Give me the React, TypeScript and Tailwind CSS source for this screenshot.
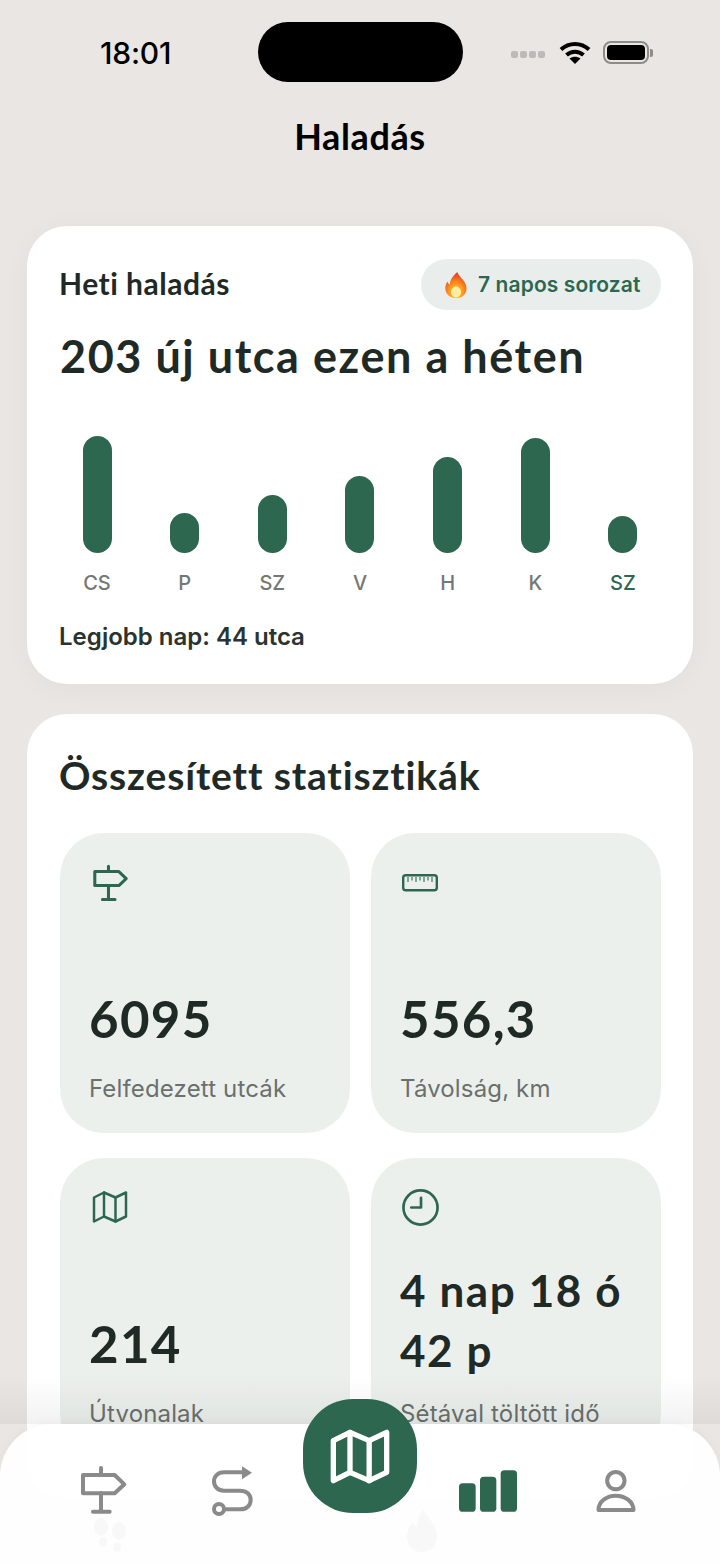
const GREEN = "#2E674F";

function Signpost({ color, className }: { color: string; className: string }) {
  return (
    <svg viewBox="235 255 150 150" fill="none" stroke={color} strokeWidth="12" strokeLinecap="round" strokeLinejoin="round" className={className}>
      <path d="M250 285H345L374 313L345 340H250Z" />
      <path d="M304 264V285M304 340V395M280 395H330" />
    </svg>
  );
}

function Ruler({ className }: { className: string }) {
  return (
    <svg viewBox="0 0 36 18" fill="none" stroke={GREEN} strokeLinejoin="round" className={className}>
      <rect x="1.2" y="1.2" width="33.6" height="15" rx="2.5" strokeWidth="2.4" />
      <path d="M6 3V8M10 3V6.5M14 3V8M18 3V6.5M22 3V8M26 3V6.5M30 3V8" strokeWidth="1.1" />
    </svg>
  );
}

function MapIcon({ color, strokeWidth, className }: { color: string; strokeWidth: number; className: string }) {
  return (
    <svg viewBox="0 0 36 34" fill="none" stroke={color} strokeWidth={strokeWidth} strokeLinecap="round" strokeLinejoin="round" className={className}>
      <path d="M2 7.5L12 2.5L23.5 7.5L34 2.5V26.5L23.5 31.5L12 26.5L2 31.5Z" />
      <path d="M12 2.5V26.5M23.5 7.5V31.5" />
    </svg>
  );
}

function Clock({ className }: { className: string }) {
  return (
    <svg viewBox="0 0 36 36" fill="none" stroke={GREEN} strokeWidth="2.6" strokeLinecap="round" strokeLinejoin="round" className={className}>
      <circle cx="18" cy="18" r="16.6" />
      <path d="M18.5 8.5V18H9" />
    </svg>
  );
}

function RouteIcon({ className }: { className: string }) {
  return (
    <svg viewBox="625 250 135 162" fill="none" stroke="#8A8A8A" strokeWidth="12" strokeLinecap="round" className={className}>
      <path d="M730 275H670C650 275 640 288 640 302C640 318 652 330 670 330H718C738 330 750 342 750 358C750 374 738 386 718 386H674" />
      <circle cx="655" cy="385" r="15" />
      <path d="M724 257L754 276L724 296Z" fill="#8A8A8A" stroke="none" />
    </svg>
  );
}

function BarsIcon({ className }: { className: string }) {
  return (
    <svg viewBox="296 269 174 125" fill={GREEN} className={className}>
      <rect x="296" y="308" width="50" height="86" rx="11" />
      <rect x="359" y="289" width="49" height="105" rx="11" />
      <rect x="421" y="269" width="49" height="125" rx="11" />
    </svg>
  );
}

function Person({ className }: { className: string }) {
  return (
    <svg viewBox="705 265 125 132" fill="none" stroke="#8A8A8A" strokeWidth="12" strokeLinejoin="round" className={className}>
      <circle cx="767" cy="300" r="26" />
      <path d="M715 388C715 362 740 345 767 345C794 345 820 362 820 388Z" />
    </svg>
  );
}

function Flame({ className }: { className: string }) {
  return (
    <svg viewBox="0 0 22 26" className={className}>
      <defs>
        <radialGradient id="flameFill" cx="0.5" cy="0.78" r="0.7">
          <stop offset="0" stopColor="#FFE45C" />
          <stop offset="0.45" stopColor="#FF9A1F" />
          <stop offset="1" stopColor="#E8431F" />
        </radialGradient>
      </defs>
      <path d="M12.5 0C13.5 4 17 6 19.5 10C22.5 15 22 20 18.5 23.5C16.5 25.3 14 26 11 26C7 26 3.5 24.5 1.5 21C-0.5 17 0.3 12.5 2.5 9.5C3 11 3.6 12 5 12.5C4.8 8 8 3.5 12.5 0Z" fill="url(#flameFill)" />
      <ellipse cx="11" cy="20" rx="5" ry="5.4" fill="#FFF0A0" />
    </svg>
  );
}

const bars = [
  { label: "CS", height: 117 },
  { label: "P", height: 40 },
  { label: "SZ", height: 58 },
  { label: "V", height: 77 },
  { label: "H", height: 96 },
  { label: "K", height: 115 },
  { label: "SZ", height: 37, active: true },
];

function Tile({ icon, value, label, small }: { icon: React.ReactNode; value: React.ReactNode; label: string; small?: boolean }) {
  return (
    <div className="h-[300px] rounded-[44px] bg-[#ECF0ED] pl-[29px] pr-[20px] pt-[31px] pb-[29px] flex flex-col justify-between">
      <div className="h-[38px]">{icon}</div>
      <div>
        <div className={`font-['Lato',sans-serif] font-bold leading-[60px] text-[#1F2A27] ${small ? "text-[44px] tracking-[1.6px]" : "text-[51px] tracking-[1.3px]"}`}>{value}</div>
        <div className={`text-[24px] leading-[30px] tracking-[0.15px] text-[#6B706D] ${small ? "mt-[19px]" : "mt-[25px]"}`}>{label}</div>
      </div>
    </div>
  );
}

export default function App() {
  return (
    <div className="relative w-[720px] h-[1564px] overflow-hidden bg-[#E9E6E3] font-['Inter',sans-serif]">
      {/* Status bar */}
      <div className="relative h-[106px] pt-[35px] px-[100px] flex justify-between">
        <span className="text-[30px] leading-[36px] font-medium text-black tracking-[-0.2px]">18:01</span>
        <div className="absolute left-[258px] top-[22px] w-[205px] h-[60px] rounded-[30px] bg-black" />
        <div className="absolute left-[511px] top-[41px] flex items-center">
          <div className="flex gap-[2px] mt-[4px]">
            <span className="w-[7px] h-[7px] rounded-[2px] bg-[#BDBBB9]" />
            <span className="w-[7px] h-[7px] rounded-[2px] bg-[#BDBBB9]" />
            <span className="w-[7px] h-[7px] rounded-[2px] bg-[#BDBBB9]" />
            <span className="w-[7px] h-[7px] rounded-[2px] bg-[#BDBBB9]" />
          </div>
          <svg viewBox="0 0 32 23" fill="none" stroke="#000" strokeWidth="4" className="ml-[14px] w-[32px] h-[23px]">
            <path d="M2 8.5C10 1 22 1 30 8.5" />
            <path d="M7.5 14C12.5 9.5 19.5 9.5 24.5 14" />
            <path d="M16 23L10.5 17.5C14 15 18 15 21.5 17.5Z" fill="#000" stroke="none" />
          </svg>
          <div className="ml-[12px] flex items-center">
            <div className="w-[46px] h-[23px] rounded-[8px] border-[2px] border-[#8E8C8A] p-[2px]">
              <div className="w-full h-full rounded-[4px] bg-black" />
            </div>
            <div className="ml-[1px] w-[3px] h-[8px] rounded-r-[2px] bg-[#8E8C8A]" />
          </div>
        </div>
      </div>

      {/* Title */}
      <h1 className="text-center text-[36px] leading-[60px] font-bold text-black font-['Lato',sans-serif] tracking-[0.6px]">Haladás</h1>

      <div className="mt-[60px] px-[27px] flex flex-col gap-[30px]">
        {/* Weekly card */}
        <section className="h-[458px] rounded-[40px] bg-white shadow-[0_4px_28px_rgba(0,0,0,0.04)] pl-[33px] pr-[32px] pt-[33px]">
          <div className="flex items-center justify-between">
            <h2 className="-mt-[4px] -ml-[1px] font-['Lato',sans-serif] font-bold text-[30px] leading-[50px] tracking-[0.5px] text-[#1F2A27]">Heti haladás</h2>
            <div className="h-[51px] w-[240px] rounded-full bg-[#E9EEEC] flex items-center pl-[24px] gap-[11px]">
              <Flame className="w-[22px] h-[26px]" />
              <span className="text-[21px] font-semibold tracking-[0.1px] text-[#2E674F]">7 napos sorozat</span>
            </div>
          </div>
          <p className="mt-[18px] font-['Lato',sans-serif] font-bold text-[45px] leading-[56px] tracking-[1.55px] text-[#1F2A27]">203 új utca ezen a héten</p>
          <div className="mt-[51px] ml-[1px] mr-[2px] h-[118px] flex justify-between items-end">
            {bars.map((b, i) => (
              <div key={i} className="w-[72px] flex justify-center">
                <div className="w-[29px] rounded-full bg-[#2E674F]" style={{ height: b.height }} />
              </div>
            ))}
          </div>
          <div className="mt-[17px] ml-[1px] mr-[2px] flex justify-between">
            {bars.map((b, i) => (
              <span key={i} className={`w-[72px] text-center text-[20px] leading-[26px] font-medium ${b.active ? "text-[#2E674F]" : "text-[#747875]"}`}>{b.label}</span>
            ))}
          </div>
          <p className="mt-[26px] -ml-[1px] text-[24px] leading-[30px] font-semibold text-[#2A3330]">Legjobb nap: 44 utca</p>
        </section>

        {/* Totals card */}
        <section className="rounded-[40px] bg-white pl-[33px] pr-[32px] pt-[33px] pb-[40px]">
          <h2 className="-ml-[1px] font-['Lato',sans-serif] font-bold text-[39px] leading-[56px] tracking-[0.85px] text-[#1F2A27]">Összesített statisztikák</h2>
          <div className="mt-[30px] grid grid-cols-2 gap-x-[21px] gap-y-[25px]">
            <Tile icon={<Signpost color={GREEN} className="w-[38px] h-[38px] ml-[2px]" />} value="6095" label="Felfedezett utcák" />
            <Tile icon={<Ruler className="w-[36px] h-[18px] mt-[10px] ml-[2px]" />} value="556,3" label="Távolság, km" />
            <Tile icon={<MapIcon color={GREEN} strokeWidth={2.5} className="w-[36px] h-[34px] mt-[1px] ml-[3px]" />} value="214" label="Útvonalak" />
            <Tile small icon={<Clock className="w-[37px] h-[37px] ml-[2px]" />} value={<>4 nap 18 ó<br />42 p</>} label="Sétával töltött idő" />
          </div>
        </section>
      </div>

      {/* Shade above the tab bar */}
      <div className="absolute left-0 right-0 top-[1374px] h-[50px] bg-gradient-to-b from-transparent to-black/5" />

      {/* Tab bar */}
      <nav className="absolute left-0 right-0 bottom-0 h-[140px] rounded-t-[52px] bg-white/95 shadow-[0_-2px_10px_rgba(0,0,0,0.03)] px-[39px] grid grid-cols-5">
        {/* Faint tab shapes under the bar */}
        <svg viewBox="0 0 34 34" fill="#F7F8F7" className="absolute left-[93px] top-[94px] w-[34px] h-[34px]">
          <ellipse cx="8" cy="9" rx="7" ry="9" />
          <ellipse cx="10" cy="24" rx="4" ry="5" />
          <ellipse cx="26" cy="13" rx="7" ry="9" />
          <ellipse cx="24" cy="29" rx="4" ry="5" />
        </svg>
        <svg viewBox="0 0 30 42" fill="#F7F8F7" className="absolute left-[407px] top-[86px] w-[30px] h-[42px]">
          <path d="M17 0C19 7 30 14 30 27C30 36 23 42 15 42C7 42 0 36 0 27C0 20 4 15 6 12C7 15 9 17 10 17C10 10 12 4 17 0Z" />
        </svg>
        <div className="flex justify-center pt-[41px]"><Signpost color="#8A8A8A" className="w-[50px] h-[50px]" /></div>
        <div className="flex justify-center pt-[40px]"><RouteIcon className="w-[45px] h-[54px]" /></div>
        <div className="relative flex justify-center">
          <div className="-mt-[25px] w-[114px] h-[114px] shrink-0 rounded-[50px] bg-[#2E674F] flex items-center justify-center">
            <MapIcon color="#FFFFFF" strokeWidth={3.2} className="w-[60px] h-[57px]" />
          </div>
        </div>
        <div className="flex justify-center pt-[46px]"><BarsIcon className="w-[58px] h-[42px]" /></div>
        <div className="flex justify-center pt-[45px]"><Person className="w-[42px] h-[44px] -ml-[2px]" /></div>
      </nav>
    </div>
  );
}
